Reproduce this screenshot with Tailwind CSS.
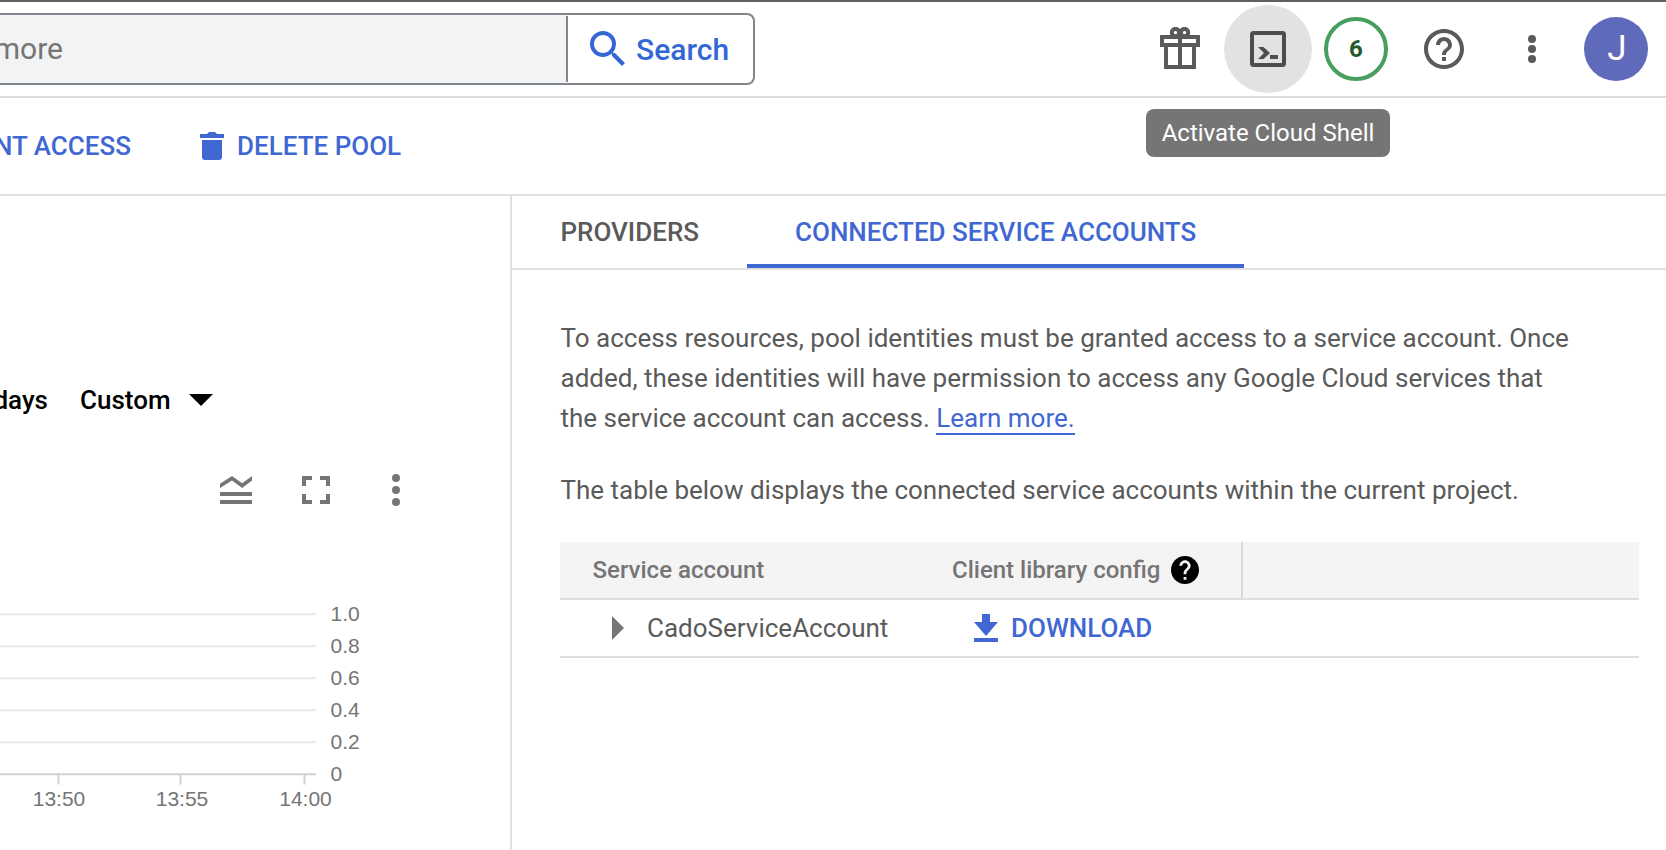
<!DOCTYPE html>
<html lang="en">
<head>
<meta charset="utf-8">
<title>Workload identity pool</title>
<script src="https://cdn.jsdelivr.net/npm/@tailwindcss/browser@4"></script>
</head>
<body class="w-[1666px] h-[850px] overflow-hidden bg-white font-['Roboto',sans-serif] text-[#5a5a5a] flex flex-col whitespace-nowrap">
  <header class="relative h-[98px] shrink-0 flex items-center border-t-2 border-t-[#5f6061] border-b-2 border-b-[#dadce0]">
    <div class="w-[755px] h-[72px] flex items-center border-2 border-l-0 border-[#80868b] rounded-r-[8px] overflow-hidden">
      <div class="w-[566px] h-full flex items-center bg-[#f1f3f4] text-[30px] text-[#757575]"><span class="w-[63px] pb-[2px] flex justify-end">more</span></div>
      <div class="w-[2px] h-[66px] bg-[#80868b]"></div>
      <div class="flex items-center pl-4 gap-1 text-[#3367d6]">
        <svg class="size-12" viewBox="0 0 24 24" fill="currentColor"><path d="M15.5 14h-.79l-.28-.27A6.47 6.47 0 0 0 16 9.5 6.5 6.5 0 1 0 9.5 16c1.61 0 3.09-.59 4.23-1.57l.27.28v.79l5 4.99L20.49 19l-4.99-5zm-6 0C7.01 14 5 11.99 5 9.5S7.01 5 9.5 5 14 7.01 14 9.5 11.99 14 9.5 14z"/></svg>
        <span class="text-[30px] font-medium">Search</span>
      </div>
    </div>
    <svg class="ml-[405px] mb-[2px] w-[40px] h-[42px]" viewBox="0 0 40 42" fill="none" stroke="#5a5a5a" stroke-width="4"><path d="M2 10h36v8H2zM6 18v22h28V18M20 9v31"/><circle cx="15.500" cy="5.600" r="3.700"/><circle cx="24.500" cy="5.600" r="3.700"/></svg>
    <div class="ml-6 size-[88px] rounded-full bg-[#e2e2e2] flex items-center justify-center">
      <svg class="size-9" viewBox="0 0 36 36"><rect x="2" y="2" width="32" height="32" rx="1.5" fill="none" stroke="#4d4d4d" stroke-width="4"/><path d="M8 16h5.500l6.500 6-6.500 6H8l6-6zM20 24h8v4h-8z" fill="#4d4d4d"/></svg>
    </div>
    <div class="ml-3 size-16 rounded-full border-4 border-[#469f5c] flex items-center justify-center text-[24px] font-bold text-[#22592c]">6</div>
    <svg class="ml-8 size-12" viewBox="0 0 24 24" fill="#5a5a5a"><path d="M11 18h2v-2h-2v2zm1-16C6.480 2 2 6.480 2 12s4.480 10 10 10 10-4.480 10-10S17.520 2 12 2zm0 18c-4.410 0-8-3.590-8-8s3.590-8 8-8 8 3.590 8 8-3.590 8-8 8zm0-14c-2.210 0-4 1.790-4 4h2c0-1.100.9-2 2-2s2 .9 2 2c0 2-3 1.750-3 5h2c0-2.250 3-2.500 3-5 0-2.210-1.790-4-4-4z"/></svg>
    <svg class="ml-[60px] w-2 h-7" viewBox="0 0 8 28" fill="#5a5a5a"><circle cx="4" cy="4" r="4"/><circle cx="4" cy="14" r="4"/><circle cx="4" cy="24" r="4"/></svg>
    <div class="ml-12 size-16 rounded-full bg-[#5f6bba] text-white text-[35px] flex items-center justify-center pl-[2px]">J</div>
    <div class="absolute left-[1146px] top-[107px] w-[244px] h-12 rounded-[8px] bg-[#757575] text-white text-[24px] flex items-center justify-center">Activate Cloud Shell</div>
  </header>

  <div class="h-[98px] shrink-0 flex items-center border-b-2 border-[#e0e0e0] text-[26px] font-medium text-[#4067d2]">
    <div class="w-[131px] flex justify-end">NT ACCESS</div>
    <svg class="ml-[69px] w-6 h-7" viewBox="0 0 24 28" fill="currentColor"><path d="M7 2l2-2h6l2 2h7v4H0V2zM2 8h20v17a3 3 0 0 1-3 3H5a3 3 0 0 1-3-3z"/></svg>
    <span class="ml-[13px]">DELETE POOL</span>
  </div>

  <main class="flex-1 flex">
    <section class="w-[510px] flex flex-col">
      <div class="mt-[180px] h-12 flex items-center text-[26px] font-medium text-black">
        <div class="w-[48px] flex justify-end">days</div>
        <span class="ml-8">Custom</span>
        <svg class="ml-[18px] w-6 h-3" viewBox="0 0 24 12"><path d="M0 0h24L12 12z"/></svg>
      </div>
      <div class="mt-[50px] ml-[220px] h-8 flex items-center text-[#757575]">
        <svg class="w-8 h-7" viewBox="0 0 32 28" fill="currentColor"><path d="M0 7.800 12 0l10.200 7.200L32 0v4.400L22.200 12 12 4.400 0 12zM0 16h32v4H0zM0 24h32v4H0z"/></svg>
        <svg class="ml-[50px] size-7" viewBox="0 0 28 28" fill="none" stroke="currentColor" stroke-width="4"><path d="M2 10V2h8M18 2h8v8M26 18v8h-8M10 26H2v-8"/></svg>
        <svg class="ml-[62px] w-2 h-8" viewBox="0 0 8 32" fill="currentColor"><circle cx="4" cy="4" r="4"/><circle cx="4" cy="16" r="4"/><circle cx="4" cy="28" r="4"/></svg>
      </div>
      <svg class="mt-[84px] w-[400px] h-[240px] font-['Liberation_Sans',sans-serif]" viewBox="0 0 400 240" font-size="21" fill="#757575">
        <g stroke="#ebebeb" stroke-width="2"><path d="M0 24.300h316M0 56.300h316M0 88.300h316M0 120.300h316M0 152.300h316"/></g>
        <path d="M0 184.300h316M58.500 185v9.500M180.500 185v9.500M304.500 185v9.500" stroke="#d2d2d2" stroke-width="2"/>
        <text x="330.500" y="31">1.0</text><text x="330.500" y="63">0.8</text><text x="330.500" y="95">0.6</text><text x="330.500" y="127">0.4</text><text x="330.500" y="159">0.2</text><text x="330.500" y="191">0</text>
        <g text-anchor="middle"><text x="59" y="216">13:50</text><text x="182" y="216">13:55</text><text x="305.500" y="216">14:00</text></g>
      </svg>
    </section>

    <section class="flex-1 border-l-2 border-[#e0e0e0]">
      <nav class="h-[74px] flex border-b-2 border-[#e0e0e0] text-[26px] font-medium">
        <div class="w-[235px] pl-[48.500px] flex items-center">PROVIDERS</div>
        <div class="w-[497px] pl-12 pt-1 flex items-center border-b-4 border-[#4067d2] text-[#4067d2]">CONNECTED SERVICE ACCOUNTS</div>
      </nav>
      <div class="pl-12 pt-12 text-[26px] leading-[40px]">
        <p class="pl-[0.500px]">To access resources, pool identities must be granted access to a service account. Once<br>added, these identities will have permission to access any Google Cloud services that<br>the service account can access. <a class="inline-block h-[37px] leading-[40px] border-b-2 border-[#4067d2] text-[#4067d2]">Learn more.</a></p>
        <p class="mt-8 pl-[0.500px]">The table below displays the connected service accounts within the current project.</p>
        <div class="mt-8 w-[1079px]">
          <div class="h-[58px] flex items-center bg-[#f4f4f4] border-b-2 border-[#dddddd] text-[24px] font-medium text-[#757575]">
            <div class="w-[360px] pl-[32.500px]">Service account</div>
            <div class="w-[323px] h-full pl-8 flex items-center border-r-2 border-[#d8d8d8]">Client library config
              <svg class="ml-[11px] size-7" viewBox="2 2 20 20" fill="black"><path d="M12 2C6.480 2 2 6.480 2 12s4.480 10 10 10 10-4.480 10-10S17.520 2 12 2zm1 17h-2v-2h2v2zm2.070-7.750l-.9.920C13.450 12.900 13 13.500 13 15h-2v-.5c0-1.100.45-2.100 1.170-2.830l1.240-1.260c.37-.36.59-.86.59-1.410 0-1.100-.9-2-2-2s-2 .9-2 2H8c0-2.210 1.790-4 4-4s4 1.790 4 4c0 .88-.36 1.680-.93 2.250z"/></svg>
            </div>
          </div>
          <div class="h-[58px] flex items-center border-b-2 border-[#dedede]">
            <svg class="ml-[52px] w-3 h-6" viewBox="0 0 12 24" fill="#757575"><path d="M0 0l12 12L0 24z"/></svg>
            <div class="ml-[23px] w-[327px]">CadoServiceAccount</div>
            <div class="flex items-center text-[#4067d2] font-medium">
              <svg class="w-6 h-7" viewBox="0 0 24 28" fill="currentColor"><path d="M8 0h8v8h8L12 22 0 8h8zM0 24h24v4H0z"/></svg>
              <span class="ml-[13px]">DOWNLOAD</span>
            </div>
          </div>
        </div>
      </div>
    </section>
  </main>
</body>
</html>
